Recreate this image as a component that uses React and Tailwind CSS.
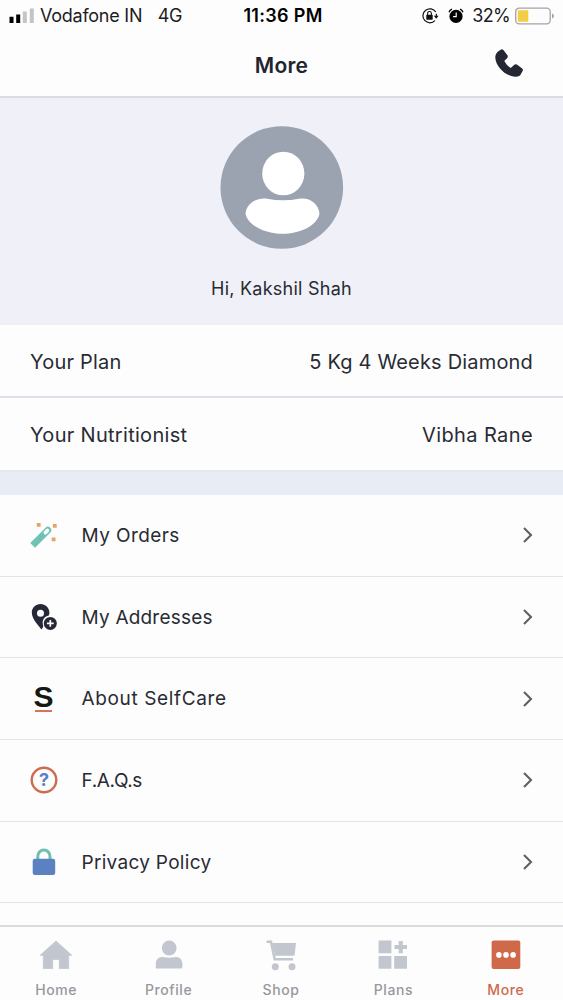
import React from "react";

const OrdersIcon = () => (
  <svg width="28" height="28" viewBox="0 0 28 28" fill="none">
    <g transform="rotate(45 11 16)">
      <path
        fillRule="evenodd"
        d="M7.6 6.5Q7.6 2.9 11 2.9Q14.4 2.9 14.4 6.5V27.8H7.6ZM11 5Q9.2 5 9.2 7V9.8Q9.2 11.6 11 11.6Q12.8 11.6 12.8 9.8V7Q12.8 5 11 5Z"
        fill="#6fc2b5"
      />
    </g>
    <path d="M6.8 2h3.8v3.7H6.8zM22.9 3h3.8v3.7h-3.8zM21.7 16.4h3.8v3.8h-3.8z" fill="#e9a266" />
  </svg>
);

const AddressIcon = () => (
  <svg width="28" height="28" viewBox="0 0 28 28" fill="none">
    <path
      fillRule="evenodd"
      d="M10.5 1C5.6 1 1.8 4.7 1.8 9.6C1.8 15.8 7.6 21.5 11.4 26.5Q13 25 13.3 22.8A7.2 7.2 0 0 1 18.8 12.6Q19.4 11 19.4 9.6C19.4 4.7 15.5 1 10.5 1ZM10.5 6.8A3.5 3.5 0 1 1 10.5 13.8A3.5 3.5 0 1 1 10.5 6.8Z"
      fill="#252837"
    />
    <circle cx="20.3" cy="20.4" r="6.5" fill="#252837" />
    <path d="M20.3 17v6.8M16.9 20.4h6.8" stroke="#fff" strokeWidth="1.7" />
  </svg>
);

const SelfCareIcon = () => (
  <div className="flex w-[18px] flex-col items-center">
    <span className="h-[24px] text-[30px] leading-[23px] font-bold text-[#171716] font-['Liberation_Sans',sans-serif]">
      S
    </span>
    <div className="mt-px h-[2.5px] w-[17px] bg-[#dc705a]"></div>
  </div>
);

const FaqIcon = () => (
  <svg width="28" height="28" viewBox="0 0 28 28">
    <circle cx="14" cy="14" r="12.3" fill="none" stroke="#d06b4e" strokeWidth="2.4" />
    <text x="14" y="20.3" textAnchor="middle" className="fill-[#5b81c4] text-[18px] font-bold">
      ?
    </text>
  </svg>
);

const PrivacyIcon = () => (
  <svg width="28" height="28" viewBox="0 0 28 28" fill="none">
    <path d="M7.8 12V8.2a6.1 6.1 0 0 1 12.2 0V12" stroke="#70beae" strokeWidth="3" />
    <rect x="2.7" y="10.8" width="22.5" height="16.2" rx="2.2" fill="#5b81c0" />
  </svg>
);

const HomeIcon = () => (
  <svg width="34" height="30" viewBox="0 0 34 30" fill="#c2c6cf">
    <path d="M17 1 1.2 15.3H4.3V28.5H13.7V19.5H20.3V28.5H29.7V15.3H32.8Z" strokeWidth=".8" stroke="#c2c6cf" strokeLinejoin="round" />
  </svg>
);

const ProfileIcon = () => (
  <svg width="34" height="30" viewBox="0 0 34 30" fill="#c2c6cf">
    <circle cx="17.2" cy="8" r="7.4" />
    <path d="M3.8 28.6V24C3.8 19.5 6.6 16.9 10.5 16.9Q17 18.5 23.7 16.9C27.6 16.9 30.4 19.5 30.4 24V27Q30.4 28.6 28.5 28.6H5.4Q3.8 28.6 3.8 28.6Z" />
  </svg>
);

const ShopIcon = () => (
  <svg width="34" height="32" viewBox="0 0 34 32" fill="#c2c6cf">
    <path d="M2.5 1.8H7L10.7 19.3H29" fill="none" stroke="#c2c6cf" strokeWidth="2.5" />
    <path d="M8.3 3H32L30.5 15.8H11.2Z" />
    <circle cx="11.3" cy="26.8" r="3.5" />
    <circle cx="28" cy="26.8" r="3.5" />
  </svg>
);

const PlansIcon = () => (
  <svg width="34" height="30" viewBox="0 0 34 30" fill="#c2c6cf">
    <path d="M2.6.6H15.4V13.3H2.6zM2.6 16H15.4V28.7H2.6zM18.2 16H31V28.7H18.2zM22.7 1H26.8V5.1H31V9.1H26.8V13.2H22.7V9.1H18.5V5.1H22.7Z" />
  </svg>
);

const MoreIcon = () => (
  <svg width="34" height="30" viewBox="0 0 34 30">
    <rect x="2.6" y=".5" width="28.7" height="28.4" rx="2" fill="#d0694a" />
    <circle cx="9.9" cy="14.9" r="2.8" fill="#fff" />
    <circle cx="17" cy="14.9" r="2.8" fill="#fff" />
    <circle cx="24.1" cy="14.9" r="2.8" fill="#fff" />
  </svg>
);

const menuItems = [
  { label: "My Orders", icon: <OrdersIcon />, spacing: "tracking-[0.4px]" },
  { label: "My Addresses", icon: <AddressIcon />, spacing: "tracking-[0.2px]" },
  { label: "About SelfCare", icon: <SelfCareIcon />, spacing: "tracking-[0.63px]" },
  { label: "F.A.Q.s", icon: <FaqIcon />, spacing: "tracking-[-0.35px]" },
  { label: "Privacy Policy", icon: <PrivacyIcon />, spacing: "tracking-[0.3px]" },
];

const tabs = [
  { label: "Home", icon: <HomeIcon /> },
  { label: "Profile", icon: <ProfileIcon /> },
  { label: "Shop", icon: <ShopIcon /> },
  { label: "Plans", icon: <PlansIcon /> },
  { label: "More", icon: <MoreIcon />, active: true },
];

const StatusBar = () => (
  <div className="grid h-8 grid-cols-3 items-center text-[18px] leading-8 text-[#1c1c1f]">
    <div className="flex items-center pl-[9px] whitespace-nowrap">
      <svg width="26" height="16" viewBox="0 0 26 16">
        <path d="M.5 8.8H4.5V15H.5zM7.2 6.5H11.2V15H7.2z" fill="#000" />
        <path d="M13.8 3.5H17.8V15H13.8zM20.8.5H24.8V15H20.8z" fill="#c4c4c6" />
      </svg>
      <span className="ml-[5px] tracking-[-0.25px]">Vodafone IN</span>
      <span className="ml-[15.5px] tracking-[-0.3px]">4G</span>
    </div>
    <p className="pl-[3px] text-center font-semibold text-black tracking-[0.3px]">11:36 PM</p>
    <div className="flex items-center justify-end pr-[8px]">
      <svg width="18" height="18" viewBox="0 0 18 18" fill="none">
        <path d="M14.8 5A7 7 0 1 0 14 13.6M15.3 6.8V9.8" stroke="#111" strokeWidth="1.2" />
        <path d="M12.8 8.8H17.6L15.2 11.7Z" fill="#111" />
        <rect x="5.3" y="7.8" width="6.4" height="4.9" rx=".6" fill="#111" />
        <path d="M6.6 8V6.4a1.9 1.9 0 0 1 3.8 0V8" stroke="#111" strokeWidth="1.1" />
      </svg>
      <svg className="ml-2" width="18" height="18" viewBox="0 0 18 18" fill="none">
        <circle cx="9" cy="9.4" r="6.6" fill="#000" />
        <path d="M2 5.2Q2.8 3 5 2.1M13 2.1Q15.2 3 16 5.2" stroke="#000" strokeWidth="1.3" />
        <path d="M9.2 5.4V9.7H6.1" stroke="#fff" strokeWidth="1.2" />
      </svg>
      <span className="ml-[7px] tracking-[-0.7px]">32%</span>
      <svg className="ml-[5px]" width="40" height="18" viewBox="0 0 40 18" fill="none">
        <rect x=".7" y="1.2" width="34.5" height="15.6" rx="3.5" stroke="#a4a4a7" strokeWidth="1.3" />
        <rect x="2.8" y="3.3" width="10.5" height="11.4" rx="1" fill="#f3cd46" />
        <path d="M37 6.5Q39 7.2 39 9Q39 10.8 37 11.5Z" fill="#a4a4a7" />
      </svg>
    </div>
  </div>
);

const Header = () => (
  <div className="grid h-[66px] shrink-0 grid-cols-3 items-center border-b-2 border-[#dadce4]">
    <h1 className="col-start-2 pt-[3px] text-center text-[21px] font-semibold tracking-[0.2px] text-[#22242d]">More</h1>
    <button className="mr-[39px] justify-self-end">
      <svg width="30" height="30" viewBox="0 0 30 30" fill="#252833">
        <path d="M4.4 2.3 7.1.5Q8.4-.1 9.4 1L13.4 6.3Q14.3 7.7 13.2 8.9L10.3 12Q12.4 16.3 16.8 19L20.3 15.8Q21.5 14.7 22.9 15.6L28.2 19.4Q29.4 20.4 28.7 21.7L27.2 24.5Q25.8 28.1 20.8 27.7C10.9 26.9 1.8 17.2 1.3 8.7Q1.2 4.7 4.4 2.3Z" />
      </svg>
    </button>
  </div>
);

const App = () => {
  return (
    <div className="flex h-[1000px] w-[563px] flex-col overflow-hidden bg-[#fdfdfe] text-[#292b32] font-[Inter,'Liberation_Sans',sans-serif]">
      <StatusBar />
      <Header />

      <div className="flex h-[227px] shrink-0 flex-col items-center bg-[#eff0f8] pt-7">
        <svg width="124" height="124" viewBox="0 0 124 124">
          <circle cx="61.8" cy="61.5" r="61.3" fill="#9ba3b1" />
          <ellipse cx="63.3" cy="47.5" rx="21.1" ry="21.8" fill="#fff" />
          <path
            d="M25.5 87.5C26.7 78 36 71.3 47 72.7Q63 76 79 72.7C90.5 71.3 98.3 78 99.5 87.5C97.5 99.5 80 107.8 62.5 107.8C45.5 107.8 27.5 99.5 25.5 87.5Z"
            fill="#fff"
          />
        </svg>
        <p className="mt-[27px] text-[18px] leading-6 tracking-[0.25px]">Hi, Kakshil Shah</p>
      </div>

      <div className="shrink-0 text-[20px]">
        <div className="flex h-[73px] items-center justify-between border-b-2 border-[#dfe1e8] px-[30px] pt-0.5">
          <p className="tracking-[0.2px]">Your Plan</p>
          <p className="tracking-[0.18px]">5 Kg 4 Weeks Diamond</p>
        </div>
        <div className="flex h-[72px] items-center justify-between px-[30px] pt-px">
          <p className="tracking-[0.3px]">Your Nutritionist</p>
          <p className="tracking-[0.4px]">Vibha Rane</p>
        </div>
      </div>
      <div className="h-[25px] shrink-0 border-t-2 border-[#e4e7ec] bg-[#e8ecf5]"></div>

      <div className="min-h-0 flex-1 overflow-hidden">
        {menuItems.map((item) => (
          <div
            key={item.label}
            className="flex h-[81.65px] items-center border-b border-[#e4e4ea] pr-[29px] pl-[29px]"
          >
            <div className="flex w-[29px] justify-center">{item.icon}</div>
            <p className={`ml-[23.5px] flex-1 pt-0.5 text-[19px] ${item.spacing}`}>{item.label}</p>
            <svg width="12" height="18" viewBox="0 0 12 18" fill="none">
              <path d="M2 2 9 9 2 16" stroke="#606064" strokeWidth="2.1" />
            </svg>
          </div>
        ))}
      </div>

      <div className="grid h-[75px] shrink-0 grid-cols-5 border-t-2 border-[#dadbe1] pr-px">
        {tabs.map((tab) => (
          <div
            key={tab.label}
            className={`flex flex-col items-center pt-[13px] text-[14px] font-medium tracking-[0.6px] ${
              tab.active ? "text-[#d0694a]" : "text-[#97989d]"
            }`}
          >
            <div className="h-[38px]">{tab.icon}</div>
            <p className="leading-6">{tab.label}</p>
          </div>
        ))}
      </div>
    </div>
  );
};

export default App;
